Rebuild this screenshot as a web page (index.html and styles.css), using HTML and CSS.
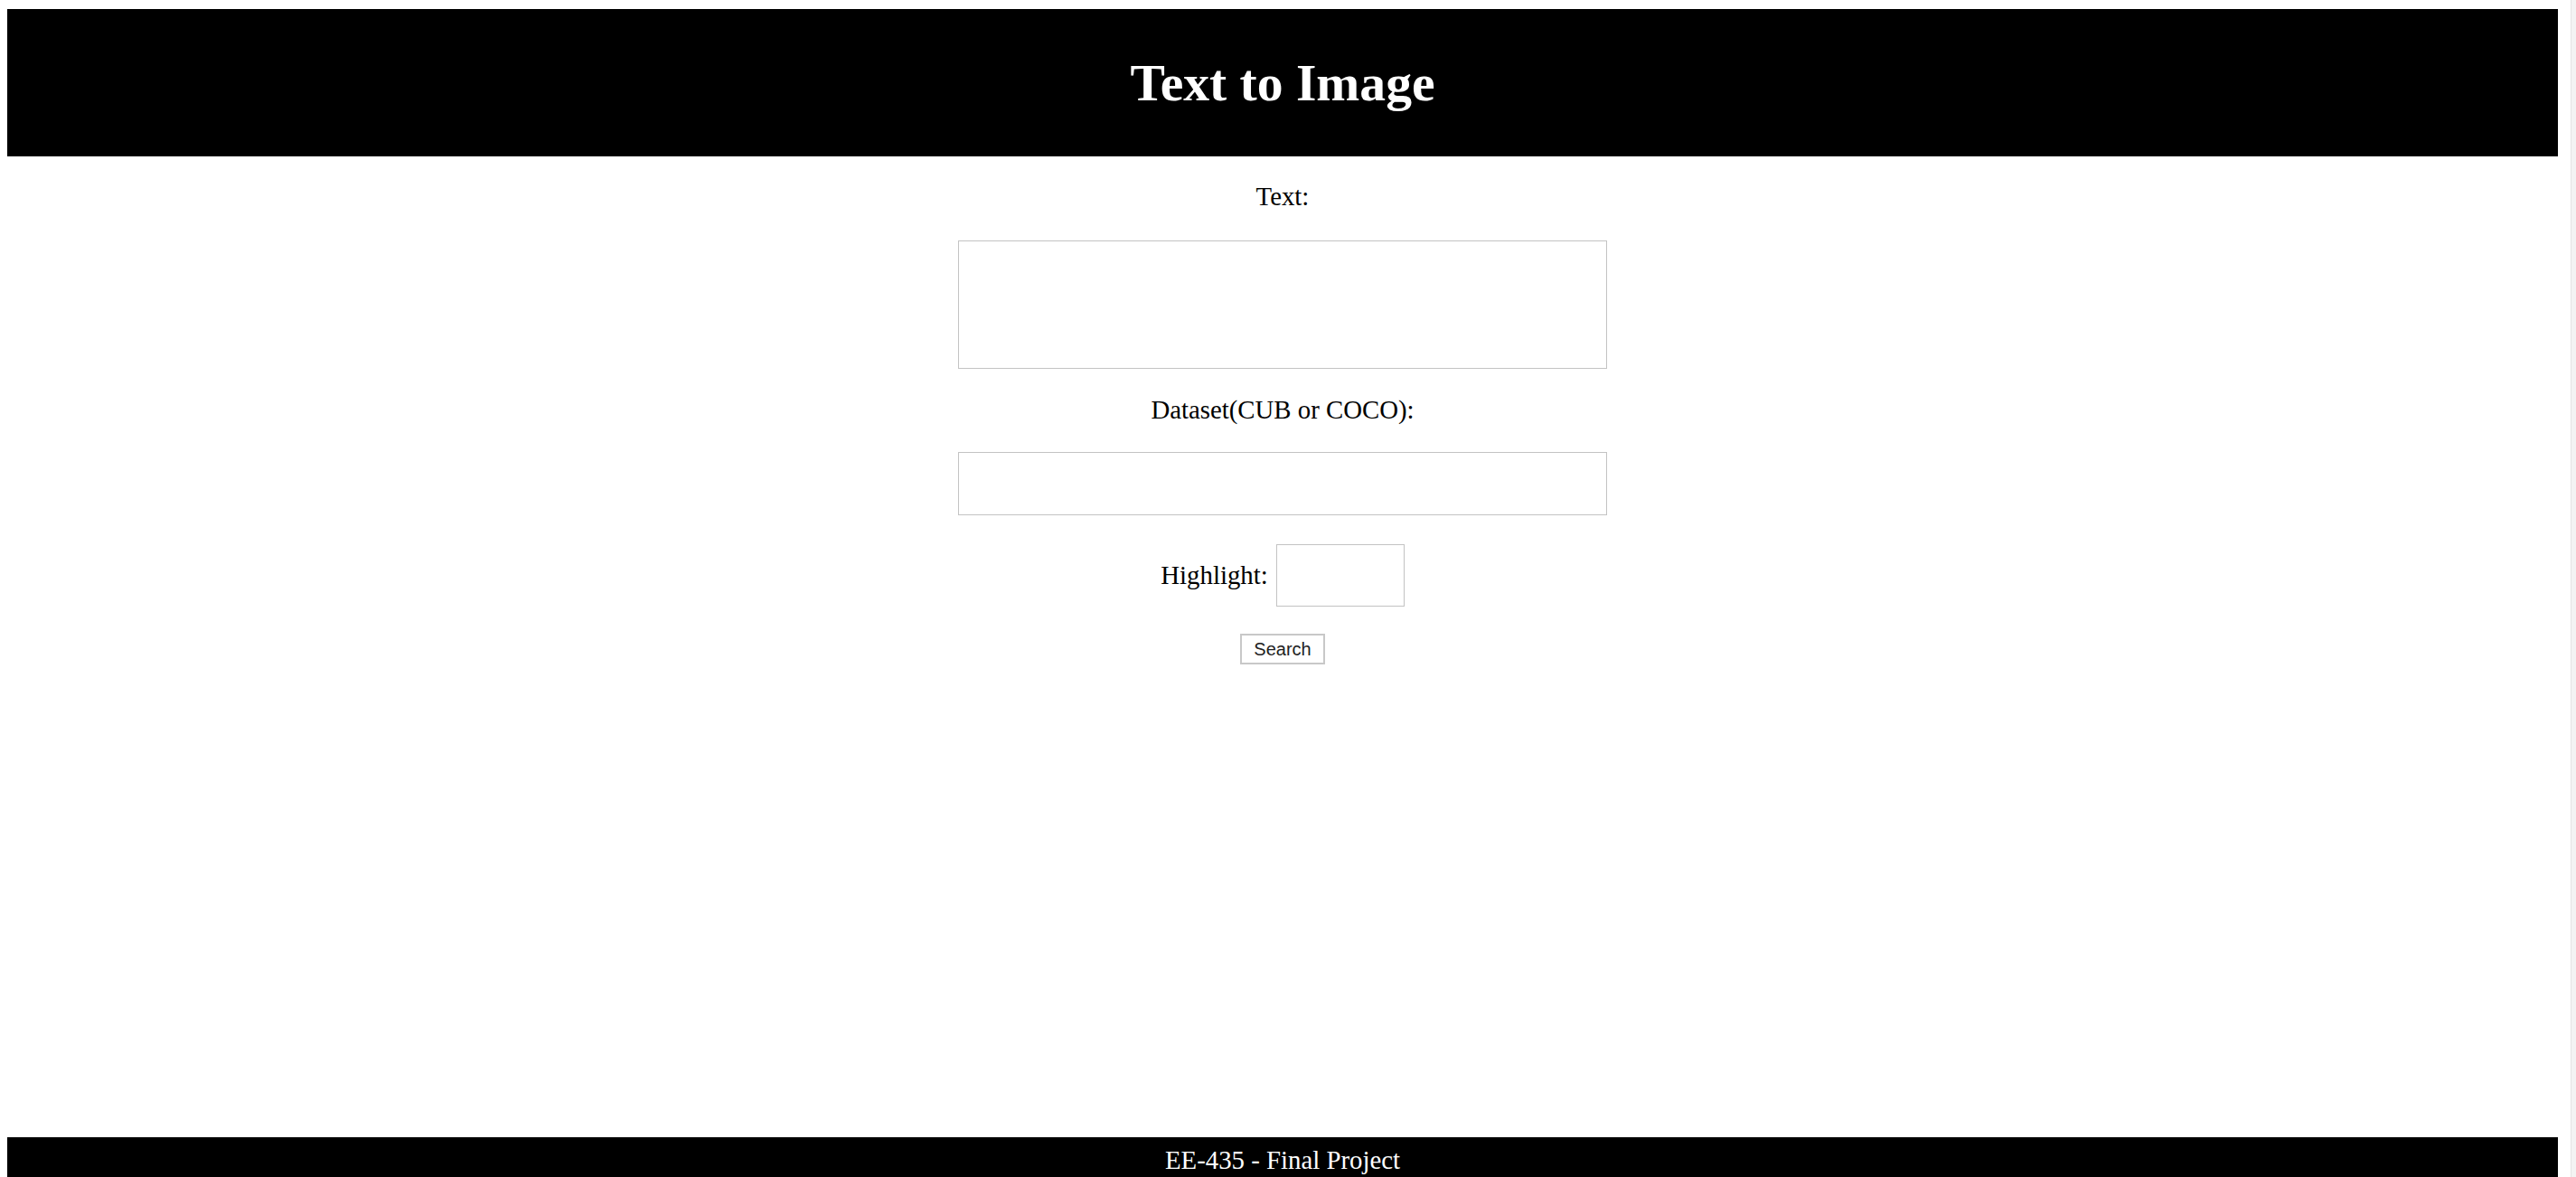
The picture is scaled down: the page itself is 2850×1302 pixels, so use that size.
FILE: index.html
```html
<!DOCTYPE html>
<html lang="en">
<head>
<meta charset="utf-8">
<title>Text to Image</title>
<link rel="stylesheet" href="styles.css">
</head>
<body>
<div class="app">
  <header class="site-header">
    <h1 class="title">Text to Image</h1>
  </header>
  <main class="form">
    <label class="label label-text" for="text">Text:</label>
    <textarea id="text" class="field field-area"></textarea>
    <label class="label label-dataset" for="dataset">Dataset(CUB or COCO):</label>
    <input id="dataset" class="field field-line" type="text">
    <div class="highlight-row">
      <label class="label" for="highlight">Highlight:</label>
      <input id="highlight" class="field field-small" type="text">
    </div>
    <button class="search" type="button">Search</button>
  </main>
  <footer class="site-footer">EE-435 - Final Project</footer>
</div>
<div class="track"></div>
</body>
</html>
```
FILE: styles.css
```css
html {
  overflow: hidden;
  background: #fff;
}
body {
  margin: 0;
  display: flex;
  height: 1302px;
  font-family: "Liberation Serif", "Times New Roman", serif;
  font-size: 28.8px;
  color: #000;
}
.app {
  width: 2822px;
  margin: 10px 0 0 8px;
  display: flex;
  flex-direction: column;
  min-height: 1299px;
}
.site-header {
  background: #000;
  color: #fff;
  padding: 10.5px 0;
  text-align: center;
}
.title {
  margin: 38.6px 0;
  font-size: 57.6px;
  font-weight: bold;
  line-height: normal;
}
.form {
  flex: 1;
  display: flex;
  flex-direction: column;
  align-items: center;
}
.label {
  line-height: normal;
}
.label-text {
  margin-top: 28px;
}
.field {
  box-sizing: border-box;
  border: 1px solid #c3c3c3;
  background: #fff;
  margin: 0;
  padding: 0;
  font: inherit;
  outline: none;
}
.field-area {
  margin-top: 32px;
  width: 718px;
  height: 142px;
  resize: none;
}
.label-dataset {
  margin-top: 29px;
}
.field-line {
  margin-top: 30px;
  width: 718px;
  height: 70px;
}
.highlight-row {
  margin-top: 32px;
  display: flex;
  align-items: center;
  gap: 9px;
}
.field-small {
  width: 142px;
  height: 69px;
}
.search {
  margin-top: 30px;
  box-sizing: border-box;
  width: 94px;
  height: 34px;
  padding: 0;
  background: #fff;
  border: 2px solid #c8c8c8;
  border-radius: 0;
  font-family: "Liberation Sans", Arial, sans-serif;
  font-size: 20px;
  color: #222;
}
.site-footer {
  background: #000;
  color: #fff;
  padding: 9px 0;
  text-align: center;
  line-height: normal;
}
.track {
  margin-left: auto;
  width: 5px;
  border-left: 1px solid #e4e4e4;
  background: #f3f3f3;
}
```
